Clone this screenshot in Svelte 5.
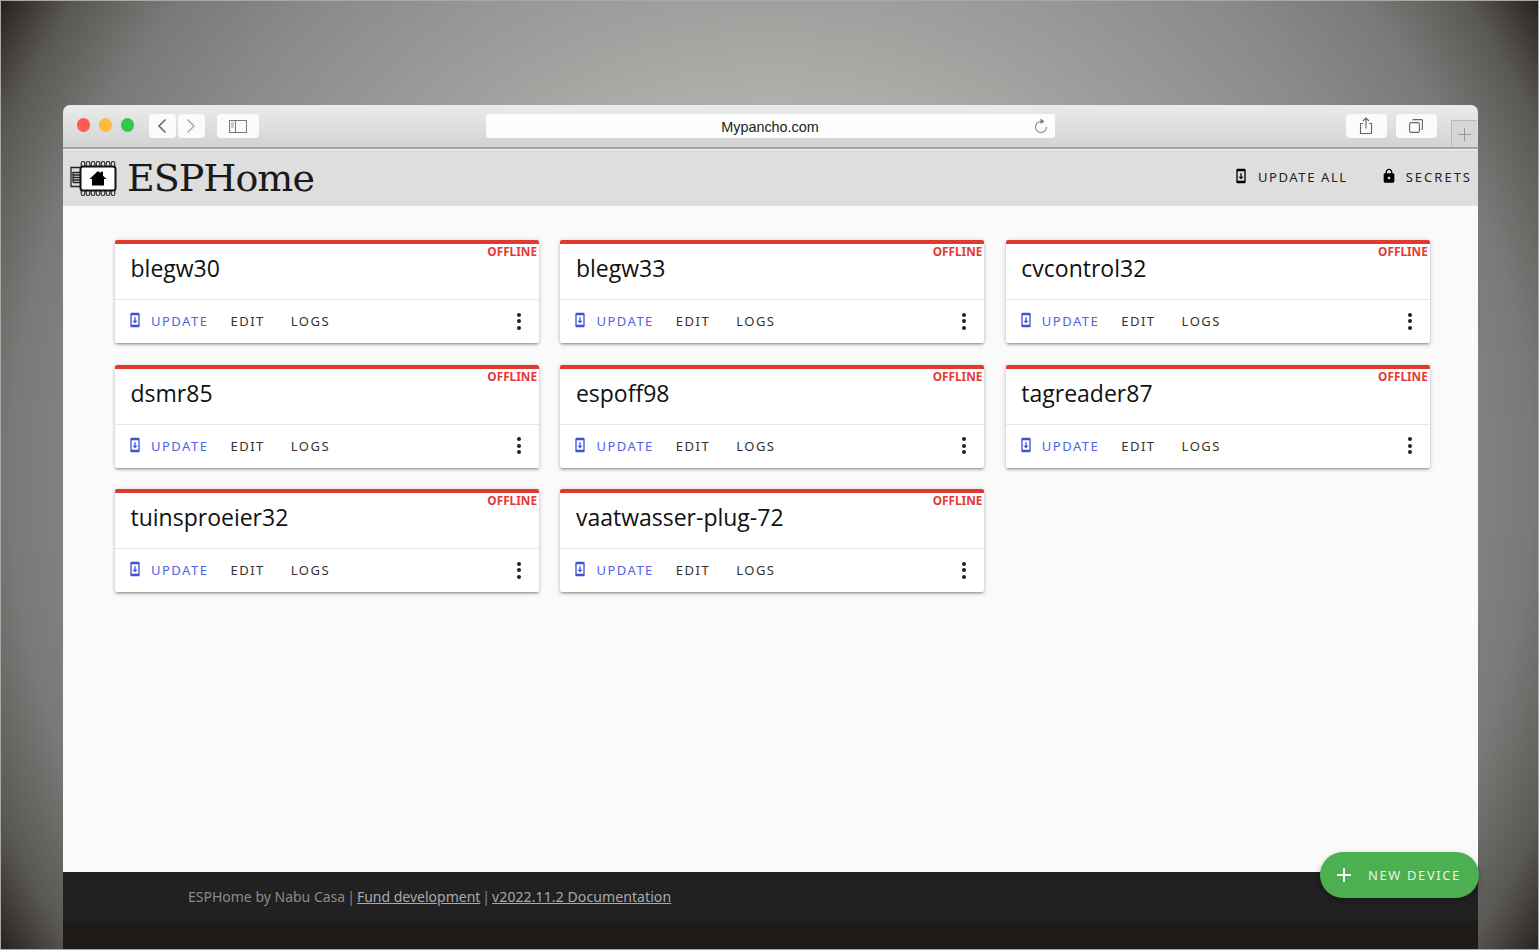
<script>
  const devices = [
    'blegw30', 'blegw33', 'cvcontrol32',
    'dsmr85', 'espoff98', 'tagreader87',
    'tuinsproeier32', 'vaatwasser-plug-72'
  ]
  const pins = [14, 19, 24, 29, 34, 39, 44]
</script>

{#snippet updateIcon()}
  <svg class="icon" viewBox="0 0 24 24" aria-hidden="true">
    <path fill="currentColor" d="M17 1H7C5.900 1 5 1.900 5 3v18c0 1.100.9 2 2 2h10c1.100 0 2-.9 2-2V3c0-1.100-.9-2-2-2zm0 18H7V5h10v14zm-1-6h-3V8h-2v5H8l4 4 4-4z"/>
  </svg>
{/snippet}

<div class="page">
  <div class="window">
    <div class="toolbar">
      <div class="lights">
        <span class="light red"></span>
        <span class="light yellow"></span>
        <span class="light green"></span>
      </div>
      <div class="nav">
        <span class="tbtn small">
          <svg width="10" height="16" viewBox="0 0 10 16"><path d="M8.500 1.500 2 8l6.500 6.500" fill="none" stroke="#666" stroke-width="1.500"/></svg>
        </span>
        <span class="tbtn small">
          <svg width="10" height="16" viewBox="0 0 10 16"><path d="M1.500 1.500 8 8l-6.500 6.500" fill="none" stroke="#aaa" stroke-width="1.500"/></svg>
        </span>
      </div>
      <span class="tbtn wide sidebar">
        <svg width="18" height="13" viewBox="0 0 18 13"><rect x=".5" y=".5" width="17" height="12" fill="none" stroke="#777"/><path d="M6.500 .5v12" stroke="#777"/><path d="M2 3h3M2 5h3M2 7h3" stroke="#999"/></svg>
      </span>
      <div class="address">
        <span class="url">Mypancho.com</span>
        <svg class="reload" width="14" height="16" viewBox="0 0 14 16"><path d="M7 3.500a5.500 5.500 0 1 0 5.500 5.500" fill="none" stroke="#888" stroke-width="1.200"/><path d="M6.500 .5 10.500 3.500 6.500 6z" fill="#777"/></svg>
      </div>
      <span class="tbtn action share">
        <svg width="14" height="18" viewBox="0 0 14 18"><path d="M4 6.500H1.500v10h11v-10H10M7 11.500V1.500M4 4l3-3 3 3" fill="none" stroke="#666" stroke-width="1.100"/></svg>
      </span>
      <span class="tbtn action tabs">
        <svg width="14" height="14" viewBox="0 0 14 14"><rect x=".6" y="3.600" width="9.800" height="9.800" rx="1.500" fill="none" stroke="#666" stroke-width="1.100"/><path d="M3.600 1.600q0-1 1-1h7.800q1 0 1 1v7.800q0 1-1 1" fill="none" stroke="#666" stroke-width="1.100"/></svg>
      </span>
      <span class="newtab">
        <svg width="13" height="13" viewBox="0 0 13 13"><path d="M6.500 0v13M0 6.500h13" stroke="#999"/></svg>
      </span>
    </div>

    <header class="topbar">
      <div class="brand">
        <svg class="logo" width="48" height="38" viewBox="0 0 48 38" aria-hidden="true">
          <g fill="none" stroke="#222" stroke-width="1.100">
            {#each pins as x}
              <rect x={x - 1.8} y="1.500" width="3.600" height="6" rx="1.800"/>
              <rect x={x - 1.800} y="29.500" width="3.600" height="6" rx="1.800"/>
            {/each}
            <path d="M11 7.500H2v19h9M11 12.500H4v2.500h7M4 17.500h7M4 20h7M4 22.500h7M4 15v7.500" stroke-width="1.300"/>
          </g>
          <rect x="11.500" y="6.500" width="35" height="24" rx="2.500" fill="#fff" stroke="#111" stroke-width="2"/>
          <path d="M29 11 20.500 19H23v6.500h12V19h2.500L34 15.700V11.800h-2.500v1.500z" fill="#000"/>
        </svg>
        <span class="wordmark">ESPHome</span>
      </div>
      <nav class="topnav">
        <span class="toplink">{@render updateIcon()}UPDATE ALL</span>
        <span class="toplink secrets">
          <svg class="icon" viewBox="0 0 24 24" aria-hidden="true"><path fill="currentColor" d="M18 8h-1V6c0-2.760-2.240-5-5-5S7 3.240 7 6v2H6c-1.100 0-2 .9-2 2v10c0 1.100.9 2 2 2h12c1.100 0 2-.9 2-2V10c0-1.100-.9-2-2-2zm-6 9c-1.100 0-2-.9-2-2s.9-2 2-2 2 .9 2 2-.9 2-2 2zm3.100-9H8.900V6c0-1.710 1.390-3.100 3.100-3.100 1.710 0 3.100 1.390 3.100 3.100v2z"/></svg>
          SECRETS
        </span>
      </nav>
    </header>

    <main class="content">
      <div class="grid">
        {#each devices as name}
          <article class="card">
            <span class="status">OFFLINE</span>
            <div class="title">{name}</div>
            <div class="actions">
              <span class="action-btn update">{@render updateIcon()}UPDATE</span>
              <span class="action-btn">EDIT</span>
              <span class="action-btn">LOGS</span>
              <span class="more"><i></i><i></i><i></i></span>
            </div>
          </article>
        {/each}
      </div>
    </main>

    <footer class="footer">
      <div class="footer-text">
        <span>ESPHome by Nabu Casa</span><span class="sep">|</span><a href="#fund">Fund development</a><span class="sep">|</span><a class="docs" href="#docs">v2022.11.2 Documentation</a>
      </div>
    </footer>
    <div class="bottom"></div>

    <div class="fab">
      <svg width="16" height="16" viewBox="0 0 16 16" aria-hidden="true"><path d="M8 1v14M1 8h14" stroke="#fff" stroke-width="1.800"/></svg>
      <span>NEW DEVICE</span>
    </div>
  </div>
</div>

<style>
  :global(body) {
    margin: 0;
    background: #333;
  }

  .page {
    height: 950px;
    overflow: hidden;
    box-sizing: border-box;
    padding: 104px 60px 0 62px;
    border: 1px solid #aaa8a4;
    background: radial-gradient(circle 905px at 770px 475px, #bab9b5 0%, #b0afab 41%, #a0a09e 52%, #8b8a88 72%, #7a7977 84%, #5a5855 93%, #26211e 100%);
    font-family: "Open Sans", "Noto Sans", sans-serif;
  }

  .window {
    position: relative;
    height: 845px;
    display: flex;
    flex-direction: column;
    border-radius: 7px 7px 0 0;
  }

  .toolbar {
    height: 44px;
    flex: none;
    box-sizing: border-box;
    display: flex;
    align-items: flex-start;
    padding: 9px 0 0 13.500px;
    background: linear-gradient(#ebebeb, #d3d3d3);
    border-bottom: 2px solid #a3a3a3;
    border-radius: 7px 7px 0 0;
  }

  .lights {
    display: flex;
    gap: 8.500px;
    margin-top: 4px;
  }

  .light {
    width: 13.500px;
    height: 13.500px;
    border-radius: 50%;
  }
  .red { background: #fc5b57; }
  .yellow { background: #fdbc40; }
  .green { background: #34c84a; }

  .nav {
    display: flex;
    gap: 2px;
    margin-left: 14.500px;
  }

  .tbtn {
    height: 24px;
    display: flex;
    align-items: center;
    justify-content: center;
    background: #fbfbfb;
    border-radius: 4px;
  }
  .small { width: 27px; }
  .wide { width: 42px; }
  .sidebar { margin-left: 12px; }

  .address {
    position: relative;
    width: 569px;
    height: 24px;
    margin-left: 227px;
    display: flex;
    align-items: center;
    justify-content: center;
    background: #fdfdfd;
    border-radius: 3px;
    font: 14.400px "Liberation Sans", Arial, sans-serif;
    color: #222;
  }

  .url {
    padding-top: 2px;
  }

  .reload {
    position: absolute;
    right: 7px;
    top: 4px;
  }

  .action { width: 41px; }
  .share { margin-left: 291px; }
  .tabs { margin-left: 9px; }

  .newtab {
    width: 26px;
    height: 27px;
    margin: 6px 0 0 14px;
    box-sizing: border-box;
    display: flex;
    align-items: center;
    justify-content: center;
    background: #d5d5d5;
    border: 1px solid #b8b8b8;
    border-right: 0;
    border-bottom: 0;
  }

  .topbar {
    height: 57px;
    flex: none;
    display: flex;
    align-items: center;
    justify-content: space-between;
    padding: 0 6px 0 6px;
    background: #dedede;
    border-top: 1px solid #f4f4f4;
    box-sizing: border-box;
    color: #111;
  }

  .brand {
    display: flex;
    align-items: center;
    gap: 10px;
  }

  .logo {
    margin-top: 2px;
  }

  .wordmark {
    font: 38px "DejaVu Serif", "Liberation Serif", serif;
    letter-spacing: -1px;
    color: #1a1a1a;
  }

  .topnav {
    display: flex;
    gap: 33px;
    margin-top: -2px;
  }

  .toplink {
    display: flex;
    align-items: center;
    gap: 9px;
    font: 13px "Noto Sans", sans-serif;
    letter-spacing: 1.600px;
    color: #222;
  }

  .secrets {
    letter-spacing: 2px;
  }

  .icon {
    width: 16px;
    height: 16px;
    flex: none;
    color: #000;
    margin-top: -2px;
  }

  .content {
    flex: 1;
    background: #fafafa;
    padding: 34px 48px 0 52px;
  }

  .grid {
    display: grid;
    grid-template-columns: repeat(3, 424px);
    grid-auto-rows: 103px;
    column-gap: 21.400px;
    row-gap: 21.500px;
  }

  .card {
    position: relative;
    display: flex;
    flex-direction: column;
    box-sizing: border-box;
    background: #fff;
    border-top: 4px solid #e03a2f;
    border-radius: 2px;
    box-shadow: 0 2px 2px rgba(0, 0, 0, .14), 0 3px 1px -2px rgba(0, 0, 0, .12), 0 1px 5px rgba(0, 0, 0, .2);
  }

  .status {
    position: absolute;
    top: -1px;
    right: 2px;
    font: bold 11.800px "Noto Sans", sans-serif;
    color: #e53935;
  }

  .title {
    height: 56px;
    flex: none;
    box-sizing: border-box;
    padding: 8px 0 0 15.500px;
    font-size: 23px;
    line-height: 32px;
    color: #111;
    border-bottom: 1px solid #e6e6e6;
  }

  .actions {
    flex: 1;
    display: flex;
    align-items: center;
    padding: 0 12px 1px 12px;
  }

  .action-btn {
    display: flex;
    align-items: center;
    font: 13px "Noto Sans", sans-serif;
    letter-spacing: 1.500px;
    color: #333;
    margin-right: 26px;
  }

  .update {
    color: #5063e0;
    margin-right: 22px;
    gap: 8px;
  }

  .update .icon {
    color: #3f51d8;
  }

  .more {
    margin-left: auto;
    display: flex;
    flex-direction: column;
    gap: 2.500px;
    padding-right: 6px;
  }

  .more i {
    width: 4px;
    height: 4px;
    border-radius: 50%;
    background: #222;
  }

  .footer {
    height: 49px;
    flex: none;
    background: #212121;
    display: flex;
    align-items: center;
    padding-left: 125px;
  }

  .footer-text {
    font: 14px "Noto Sans", sans-serif;
    color: #8a8a8a;
  }

  .footer-text a {
    color: #a9a9a9;
  }

  .docs {
    letter-spacing: .1px;
  }

  .sep {
    margin: 0 2px;
  }

  .bottom {
    height: 29px;
    flex: none;
    background: #1e1a18;
  }

  .fab {
    position: absolute;
    right: -1px;
    top: 747px;
    width: 159px;
    height: 46px;
    box-sizing: border-box;
    display: flex;
    align-items: center;
    gap: 16px;
    padding-left: 16px;
    background: #4caf50;
    border-radius: 23px;
    box-shadow: 0 3px 6px rgba(0, 0, 0, .3);
    color: #e8f5e9;
    font: 13px "Noto Sans", sans-serif;
    letter-spacing: 1.600px;
  }
</style>
